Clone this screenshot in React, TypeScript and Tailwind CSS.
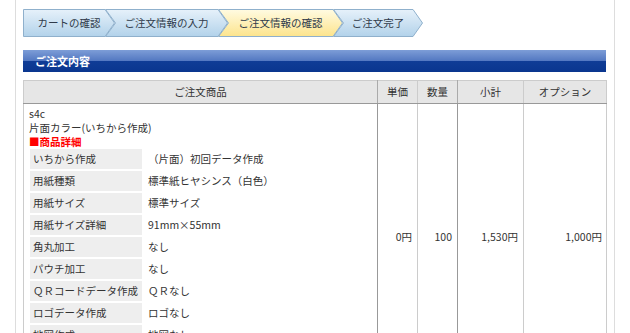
import React from "react";

type StepProps = { w: number; cls: string; label: string; first?: boolean; active?: boolean };

function Step({ w, cls, label, first, active }: StepProps) {
  const tip = 10;
  const h = 28;
  const body = w - tip;
  const pts = first
    ? `0.5,0.5 ${body},0.5 ${w - 0.5},${h / 2} ${body},${h - 0.5} 0.5,${h - 0.5}`
    : `0.5,0.5 ${body},0.5 ${w - 0.5},${h / 2} ${body},${h - 0.5} 0.5,${h - 0.5} ${tip + 0.5},${h / 2}`;
  const gid = active ? "gy" : "gb";
  return (
    <div className={`relative flex h-[28px] items-center justify-center -mr-[10px] ${cls}`}>
      <svg className="absolute inset-0" width={w} height={h} viewBox={`0 0 ${w} ${h}`}>
        <defs>
          <linearGradient id="gb" x1="0" y1="0" x2="0" y2="1">
            <stop offset="0" stopColor="#e6f1fa" />
            <stop offset="1" stopColor="#b2d2ea" />
          </linearGradient>
          <linearGradient id="gy" x1="0" y1="0" x2="0" y2="1">
            <stop offset="0" stopColor="#fffbe2" />
            <stop offset="1" stopColor="#fde48c" />
          </linearGradient>
        </defs>
        <polygon points={pts} fill={`url(#${gid})`} stroke="#8fb0cc" strokeWidth="1" />
      </svg>
      <span className="relative text-[10.5px] text-[#2f3a4a]">{label}</span>
    </div>
  );
}

const rows: [string, string][] = [
  ["いちから作成", "（片面）初回データ作成"],
  ["用紙種類", "標準紙ヒヤシンス（白色）"],
  ["用紙サイズ", "標準サイズ"],
  ["用紙サイズ詳細", "91mm×55mm"],
  ["角丸加工", "なし"],
  ["パウチ加工", "なし"],
  ["ＱＲコードデータ作成", "ＱＲなし"],
  ["ロゴデータ作成", "ロゴなし"],
  ["地図作成", "地図なし"],
  ["裏面作成", "なし"],
];

export default function App() {
  return (
    <div className="h-[333px] overflow-hidden bg-white font-['Noto_Sans_CJK_JP','Liberation_Sans',sans-serif] text-[#333]">
      <div className="ml-[15px] min-h-[333px] w-[600px] border-l border-r border-[#dddddd] pl-[7px] pr-[8px] pt-[9px]">
        <div className="flex">
          <Step w={92} cls="w-[92px] z-[4]" label="カートの確認" first />
          <Step w={123} cls="w-[123px] z-[3]" label="ご注文情報の入力" />
          <Step w={125} cls="w-[125px] z-[2]" label="ご注文情報の確認" active />
          <Step w={90} cls="w-[90px] z-[1]" label="ご注文完了" />
        </div>

        <div className="mt-[13px] flex h-[22px] items-center bg-[linear-gradient(to_bottom,#7d9dd7_0%,#5479c2_48%,#0f3c96_52%,#0a368f_100%)] pl-[12px] text-[11px] font-bold text-white">
          ご注文内容
        </div>

        <table className="mt-[8px] w-[583px] table-fixed border-collapse border border-[#cccccc] text-[10.5px]">
          <colgroup>
            <col className="w-[354px]" />
            <col className="w-[40px]" />
            <col className="w-[40px]" />
            <col className="w-[66px]" />
            <col className="w-[83px]" />
          </colgroup>
          <thead>
            <tr className="h-[23px] bg-[#e6e6e6]">
              <th className="border-b border-r border-b-[#999999] border-r-[#aaaaaa] font-normal">ご注文商品</th>
              <th className="border-b border-r border-b-[#999999] border-r-[#cccccc] font-normal">単価</th>
              <th className="border-b border-r border-b-[#999999] border-r-[#aaaaaa] font-normal">数量</th>
              <th className="border-b border-r border-b-[#999999] border-r-[#cccccc] font-normal">小計</th>
              <th className="border-b border-b-[#999999] font-normal">オプション</th>
            </tr>
          </thead>
          <tbody>
            <tr>
              <td className="border-r border-r-[#999999] pb-0 pl-[5px] pt-[3px] align-top">
                <div className="leading-[14px]">s4c</div>
                <div className="leading-[14px]">片面カラー(いちから作成)</div>
                <div className="font-bold leading-[14px] text-[#ff0000]">■商品詳細</div>
                <table className="-ml-px -mt-[2px] border-separate border-spacing-[2px]">
                  <tbody>
                    {rows.map(([k, v]) => (
                      <tr key={k}>
                        <td className="h-[20px] w-[112px] whitespace-nowrap bg-[#eeeeee] p-0 pl-[3px] leading-[20px]">{k}</td>
                        <td className="h-[20px] whitespace-nowrap p-0 pl-[4px] leading-[20px]">{v}</td>
                      </tr>
                    ))}
                  </tbody>
                </table>
              </td>
              <td className="border-r border-r-[#cccccc] pr-[5px] text-right align-middle">0円</td>
              <td className="border-r border-r-[#999999] pr-[5px] text-right align-middle">100</td>
              <td className="border-r border-r-[#cccccc] pr-[5px] text-right align-middle">1,530円</td>
              <td className="pr-[4px] text-right align-middle">1,000円</td>
            </tr>
          </tbody>
        </table>
      </div>
    </div>
  );
}
